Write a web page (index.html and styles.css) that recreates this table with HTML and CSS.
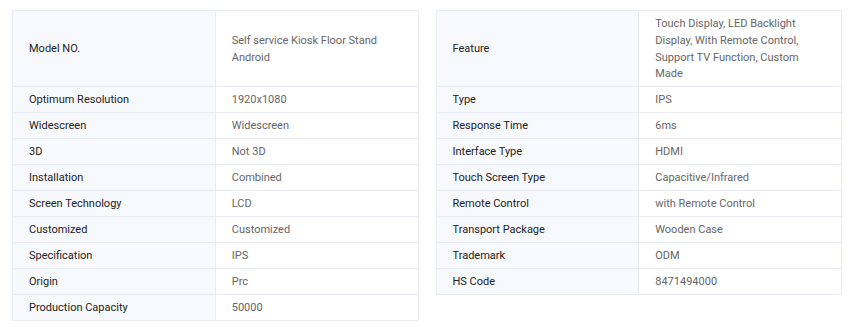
FILE: index.html
```html
<!DOCTYPE html>
<html lang="en">
<head>
  <meta charset="UTF-8">
  <meta name="viewport" content="width=device-width, initial-scale=1.0">
  <title>Product Specifications</title>
  <link rel="stylesheet" href="styles.css">
</head>
<body>
  <div class="specs">
    <div class="spec-row first">
      <div class="pair">
        <div class="cell label">Model NO.</div>
        <div class="cell value">Self service Kiosk Floor Stand Android</div>
      </div>
      <div class="pair">
        <div class="cell label">Feature</div>
        <div class="cell value">Touch Display, LED Backlight Display, With Remote Control, Support TV Function, Custom Made</div>
      </div>
    </div>
    <div class="spec-row">
      <div class="pair">
        <div class="cell label">Optimum Resolution</div>
        <div class="cell value">1920x1080</div>
      </div>
      <div class="pair">
        <div class="cell label">Type</div>
        <div class="cell value">IPS</div>
      </div>
    </div>
    <div class="spec-row">
      <div class="pair">
        <div class="cell label">Widescreen</div>
        <div class="cell value">Widescreen</div>
      </div>
      <div class="pair">
        <div class="cell label">Response Time</div>
        <div class="cell value">6ms</div>
      </div>
    </div>
    <div class="spec-row">
      <div class="pair">
        <div class="cell label">3D</div>
        <div class="cell value">Not 3D</div>
      </div>
      <div class="pair">
        <div class="cell label">Interface Type</div>
        <div class="cell value">HDMI</div>
      </div>
    </div>
    <div class="spec-row">
      <div class="pair">
        <div class="cell label">Installation</div>
        <div class="cell value">Combined</div>
      </div>
      <div class="pair">
        <div class="cell label">Touch Screen Type</div>
        <div class="cell value">Capacitive/Infrared</div>
      </div>
    </div>
    <div class="spec-row">
      <div class="pair">
        <div class="cell label">Screen Technology</div>
        <div class="cell value">LCD</div>
      </div>
      <div class="pair">
        <div class="cell label">Remote Control</div>
        <div class="cell value">with Remote Control</div>
      </div>
    </div>
    <div class="spec-row">
      <div class="pair">
        <div class="cell label">Customized</div>
        <div class="cell value">Customized</div>
      </div>
      <div class="pair">
        <div class="cell label">Transport Package</div>
        <div class="cell value">Wooden Case</div>
      </div>
    </div>
    <div class="spec-row">
      <div class="pair">
        <div class="cell label">Specification</div>
        <div class="cell value">IPS</div>
      </div>
      <div class="pair">
        <div class="cell label">Trademark</div>
        <div class="cell value">ODM</div>
      </div>
    </div>
    <div class="spec-row">
      <div class="pair">
        <div class="cell label">Origin</div>
        <div class="cell value">Prc</div>
      </div>
      <div class="pair">
        <div class="cell label">HS Code</div>
        <div class="cell value">8471494000</div>
      </div>
    </div>
    <div class="spec-row">
      <div class="pair">
        <div class="cell label">Production Capacity</div>
        <div class="cell value">50000</div>
      </div>
    </div>
  </div>
</body>
</html>
```

FILE: styles.css
```css
/* Page */
body {
  font-family: Roboto, "Liberation Sans", Arial, sans-serif;
  font-size: 11px;
  background-color: #fff;
  margin: 0;
  padding: 10px 10px 0 12px;
}

/* Spec grid: two tables side by side, rows kept in line */
.spec-row {
  display: grid;
  grid-template-columns: 1fr 1fr;
  column-gap: 17px;
}

.pair {
  display: grid;
  grid-template-columns: 1fr 1fr;
  border-left: 1px solid #e8ebf2;
}

.spec-row.first .pair {
  border-top: 1px solid #e8ebf2;
}

.cell {
  box-sizing: border-box;
  min-height: 26px;
  display: flex;
  align-items: center;
  padding: 5px 16px 3px;
  line-height: 16.75px;
  border-right: 1px solid #e8ebf2;
  border-bottom: 1px solid #e8ebf2;
}

.label {
  background-color: #f8f9fc;
  color: #222;
}

.value {
  background-color: #fff;
  color: #666;
}
```
